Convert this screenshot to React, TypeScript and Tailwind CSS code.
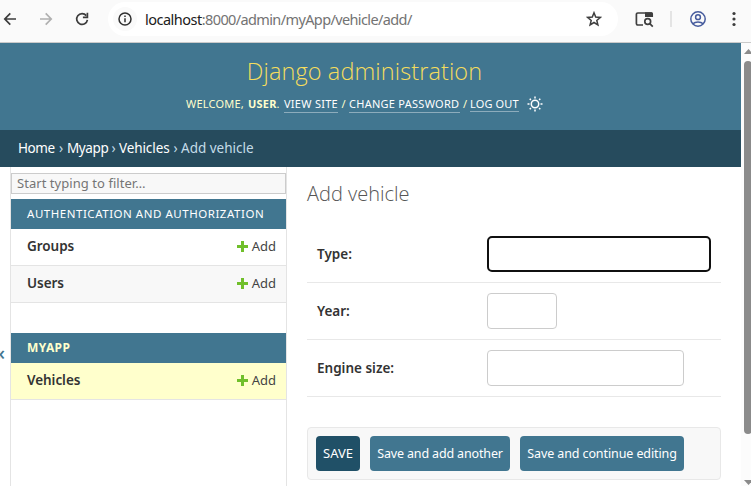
import type { ReactNode } from "react";

function Toolbar() {
  return (
    <div className="flex h-[43px] shrink-0 items-start border-b border-[#cacaca] bg-[#fafafa]">
      <div className="flex h-[38px] w-[108px] shrink-0 items-center">
        <svg width="108" height="38" viewBox="0 0 108 38" fill="none" strokeWidth="1.7">
          <path d="M16 19H5M10.3 13.4 4.8 19l5.5 5.6" stroke="#3c3c3c" />
          <path d="M40 19h11M45.7 13.4 51.2 19l-5.5 5.6" stroke="#b0b0b0" />
          <path d="M86.3 15.6A5.4 5.4 0 1 0 87.4 19.8" stroke="#3c3c3c" />
          <path d="M87.4 12.8v4.5h-4.5" stroke="#3c3c3c" />
        </svg>
      </div>
      <div className="mt-[2px] flex h-[34px] w-[510px] shrink-0 items-center rounded-full bg-white pl-[5px] pr-[16px]">
        <div className="flex size-6 items-center justify-center rounded-full bg-[#fafafa]">
          <svg width="14" height="14" viewBox="0 0 14 14" fill="none" stroke="#303030" strokeWidth="1.5">
            <circle cx="7" cy="7" r="6" />
            <path d="M7 6.2v4M7 3.6v1.5" />
          </svg>
        </div>
        <div className="ml-2 whitespace-nowrap text-[14.5px] leading-6 tracking-[-0.65px] text-[#737373]">
          <span className="tracking-[-0.5px] text-[#202020]">localhost</span>
          <span className="tracking-[-0.62px]">:8000/admin/myApp/vehicle/add/</span>
        </div>
        <svg className="ml-auto" width="16" height="16" viewBox="0 0 16 16" fill="none" stroke="#3f3f3f" strokeWidth="1.5">
          <path d="m8 1.8 1.7 4.3 4.6.3-3.5 3 1.1 4.5L8 11.5l-3.9 2.4 1.1-4.5-3.5-3 4.6-.3z" />
        </svg>
      </div>
      <svg width="133" height="38" viewBox="618 0 133 38" fill="none">
        <path d="M643 25h-5.2a1.4 1.4 0 0 1-1.4-1.4V14.4a1.4 1.4 0 0 1 1.4-1.4h13.4a1 1 0 0 1 1 1V17" stroke="#3f3f3f" strokeWidth="1.7" />
        <path d="M645 12.2h6.5a1.2 1.2 0 0 1 1.2 1.2V17H645z" fill="#3f3f3f" />
        <circle cx="647.7" cy="21.5" r="2.9" stroke="#3f3f3f" strokeWidth="1.7" />
        <path d="m649.8 23.6 3 3" stroke="#3f3f3f" strokeWidth="1.7" />
        <path d="M671 11v16" stroke="#e4e4e4" strokeWidth="2" />
        <g stroke="#465b9d" strokeWidth="1.5">
          <circle cx="698" cy="19" r="7.2" />
          <circle cx="698" cy="17.2" r="2.4" />
          <path d="M692.7 23.8c2.8-2.3 7.8-2.3 10.6 0" />
        </g>
        <g fill="#3c3c3c">
          <circle cx="734" cy="13.5" r="1.6" />
          <circle cx="734" cy="19" r="1.6" />
          <circle cx="734" cy="24.5" r="1.6" />
        </g>
      </svg>
    </div>
  );
}

function SunIcon() {
  return (
    <svg width="16" height="16" viewBox="0 0 16 16" fill="none" stroke="#fff" strokeWidth="1.5">
      <circle cx="8" cy="8" r="3.7" />
      <path d="M8 .5v2M8 13.5v2M.5 8h2M13.5 8h2M2.7 2.7l1.2 1.2M12.1 12.1l1.2 1.2M2.7 13.3l1.2-1.2M12.1 3.9l1.2-1.2" />
    </svg>
  );
}

function Header() {
  return (
    <header className="flex h-[87px] shrink-0 flex-col items-center bg-[#417690] pr-[12px]">
      <h1 className="mt-[12px] h-8 whitespace-nowrap font-['Open_Sans'] text-[23.5px] font-light leading-8 tracking-[0.1px] text-[#f5dd5d]">
        Django administration
      </h1>
      <div className="mt-[9px] flex h-4 items-center whitespace-nowrap text-[11px] leading-4 text-[#ffffcc]">
        <span className="w-[62px] tracking-[0.2px]">WELCOME,</span>
        <span className="w-[36px]">
          <b className="font-bold tracking-[0.2px]">USER</b>.
        </span>
        <a className="h-[17px] w-[54px] border-b border-white/40 tracking-[0.27px] text-white">VIEW SITE</a>
        <span className="w-[11px] text-center">/</span>
        <a className="h-[17px] w-[111px] border-b border-white/40 tracking-[0.27px] text-white">CHANGE PASSWORD</a>
        <span className="w-[10px] text-center">/</span>
        <a className="h-4 w-[49px] border-b border-white/40 tracking-[0.15px] text-white">LOG OUT</a>
        <span className="ml-2">
          <SunIcon />
        </span>
      </div>
    </header>
  );
}

function Breadcrumbs() {
  return (
    <nav className="flex h-[37px] shrink-0 items-center whitespace-nowrap bg-[#264b5d] pl-[18px] text-[13.5px] text-[#c4dce8]">
      <a className="w-[37px] tracking-[-0.4px] text-white">Home</a>
      <span className="w-3 text-center">›</span>
      <a className="w-[41px] tracking-[-0.4px] text-white">Myapp</a>
      <span className="w-[11px] text-center">›</span>
      <a className="w-[51px] tracking-[-0.1px] text-white">Vehicles</a>
      <span className="w-[11px] text-center">›</span>
      <span>Add vehicle</span>
    </nav>
  );
}

function ModelRow({ name, tone }: { name: string; tone: string }) {
  return (
    <div className={`flex h-[37px] items-center border-b border-[#e4e4e4] pb-[2px] pl-4 pr-[10px] ${tone}`}>
      <span className="text-[13.5px] font-semibold tracking-[-0.05px] text-[#333]">{name}</span>
      <a className="ml-auto flex items-center text-[13px] text-[#444]">
        <svg className="mr-[4px]" width="11" height="11" viewBox="0 0 11 11">
          <path d="M4 0h3v4h4v3H7v4H4V7H0V4h4z" fill="#70bf2b" />
        </svg>
        <span className="pt-px">Add</span>
      </a>
    </div>
  );
}

function Sidebar() {
  return (
    <aside className="flex w-[277px] shrink-0 flex-col border-x border-[#e4e4e4] pt-[6px]">
      <input
        className="h-[21px] w-full shrink-0 border border-[#ccc] bg-[#f8f8f8] px-[5px] pb-[2px] text-[13px] tracking-[0.05px] text-[#333] placeholder:text-[#757575] outline-none"
        placeholder="Start typing to filter…"
      />
      <div className="mt-[5px] flex h-[30px] shrink-0 items-center whitespace-nowrap bg-[#417690] pl-4 text-[11.5px] tracking-[0.53px] text-white">
        AUTHENTICATION AND AUTHORIZATION
      </div>
      <ModelRow name="Groups" tone="bg-white" />
      <ModelRow name="Users" tone="bg-[#f8f8f8]" />
      <div className="mt-[30px] flex h-[30px] shrink-0 items-center bg-[#417690] pl-4 text-[12px] font-bold tracking-[0.4px] text-[#ffffcc]">
        MYAPP
      </div>
      <ModelRow name="Vehicles" tone="bg-[#ffffcc]" />
    </aside>
  );
}

function Field({ label, box }: { label: string; box: string }) {
  return (
    <div className="flex h-[57px] items-center border-b border-[#e8e8e8] pl-[10px]">
      <label className="w-[170px] shrink-0 text-[13.5px] font-semibold text-[#333]">{label}</label>
      <input className={`h-9 bg-white outline-none ${box}`} />
    </div>
  );
}

function Button({ className, children }: { className: string; children: ReactNode }) {
  return (
    <button className={`flex h-[35px] items-center justify-center whitespace-nowrap rounded-[4px] text-white ${className}`}>
      {children}
    </button>
  );
}

function Content() {
  return (
    <main className="flex min-w-0 flex-1 flex-col px-5">
      <h2 className="mt-[13px] h-7 font-['Open_Sans'] text-[20px] font-light leading-7 text-[#555]">Add vehicle</h2>
      <div className="mt-[18px] shrink-0">
        <Field label="Type:" box="w-[224px] rounded-[5px] border-2 border-[#101010]" />
        <Field label="Year:" box="w-[70px] rounded-[4px] border border-[#ccc]" />
        <Field label="Engine size:" box="w-[197px] rounded-[4px] border border-[#ccc]" />
      </div>
      <div className="mt-[30px] flex h-[53px] shrink-0 gap-[10px] rounded-[4px] border border-[#e8e8e8] bg-[#f8f8f8] p-2">
        <Button className="w-[44px] bg-[#205067] text-[13px]">SAVE</Button>
        <Button className="w-[140px] bg-[#417690] pt-[2px] text-[12.5px] tracking-[-0.15px]">Save and add another</Button>
        <Button className="w-[164px] bg-[#417690] pt-[2px] text-[12.5px] tracking-[-0.1px]">Save and continue editing</Button>
      </div>
    </main>
  );
}

function Scrollbar() {
  return (
    <div className="flex w-[10px] shrink-0 flex-col overflow-hidden bg-[#fcfcfc] pl-[3px]">
      <svg className="mt-[6px] shrink-0" width="8" height="5" viewBox="0 0 8 5">
        <path d="M0 5 4.5 0 9 5z" fill="#8b8b8b" />
      </svg>
      <div className="mt-[7px] h-[373px] w-[8px] shrink-0 rounded-[4px] bg-[#8b8b8b]" />
      <svg className="mt-[46px] shrink-0" width="8" height="5" viewBox="0 0 8 5">
        <path d="M0 0h9L4.5 5z" fill="#8b8b8b" />
      </svg>
    </div>
  );
}

export default function App() {
  return (
    <div className="flex h-[486px] w-[751px] flex-col overflow-hidden bg-white font-['Noto_Sans',sans-serif]">
      <Toolbar />
      <div className="flex min-h-0 flex-1">
        <div className="flex min-w-0 flex-1 flex-col">
          <Header />
          <Breadcrumbs />
          <div className="flex min-h-0 flex-1">
            <div className="flex w-[10px] shrink-0 justify-end overflow-hidden pr-[5px] pt-[174px] text-[20px] font-medium leading-6 text-[#417690]">
              «
            </div>
            <Sidebar />
            <Content />
          </div>
        </div>
        <Scrollbar />
      </div>
    </div>
  );
}
